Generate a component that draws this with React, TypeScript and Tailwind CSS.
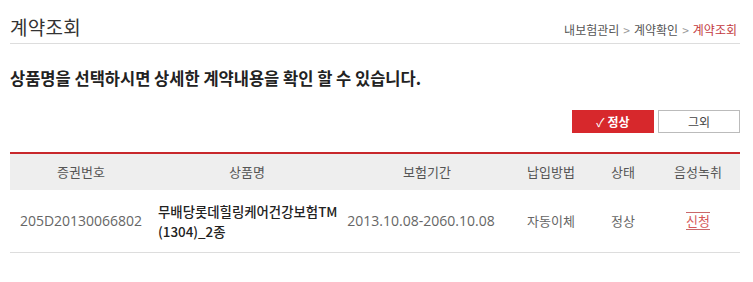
export default function App() {
  const font = { fontFamily: '"Noto Sans CJK KR", "Noto Sans", sans-serif' };
  const num = "font-['Open_Sans','Noto_Sans_CJK_KR',sans-serif] text-[14px]";
  return (
    <main className="w-[753px] h-[282px] bg-white px-[10px] text-[#555]" style={font}>
      <div className="w-[730px]">
        {/* Title row */}
        <div className="flex items-end justify-between h-[44px] border-b border-[#dddddd] pb-[3px]">
          <h1 className="text-[19px] leading-[26px] text-[#333] font-normal tracking-[0.3px]">계약조회</h1>
          <div className="flex items-center text-[12px] leading-[16px] text-[#555] mr-[3px] mb-[2px]">
            <span>내보험관리</span>
            <span className="mx-[4px] text-[#999]">&gt;</span>
            <span>계약확인</span>
            <span className="mx-[4px] text-[#999]">&gt;</span>
            <span className="text-[#c33a3e]">계약조회</span>
          </div>
        </div>

        <p className="mt-[23px] text-[16.5px] leading-[22px] font-bold text-[#222]">
          상품명을 선택하시면 상세한 계약내용을 확인 할 수 있습니다.
        </p>

        {/* Filter buttons */}
        <div className="flex justify-end gap-[4px] mt-[21px]">
          <button className="w-[82px] h-[23px] bg-[#d7282c] text-white text-[12px] font-bold flex items-center justify-center gap-[3px]">
            <span className="font-normal">✓</span>
            <span>정상</span>
          </button>
          <button className="w-[82px] h-[23px] border border-[#bbbbbb] bg-white text-[#444] text-[12px] flex items-center justify-center">
            그외
          </button>
        </div>

        {/* Table */}
        <table className="w-full mt-[19px] border-t-2 border-[#c8282c] text-[13px] table-fixed">
          <colgroup>
            <col className="w-[142px]" />
            <col className="w-[190px]" />
            <col className="w-[170px]" />
            <col className="w-[78px]" />
            <col className="w-[66px]" />
            <col className="w-[84px]" />
          </colgroup>
          <thead>
            <tr className="bg-[#eeeeee] h-[37px] text-[#555]">
              <th className="font-normal">증권번호</th>
              <th className="font-normal">상품명</th>
              <th className="font-normal">보험기간</th>
              <th className="font-normal">납입방법</th>
              <th className="font-normal">상태</th>
              <th className="font-normal">음성녹취</th>
            </tr>
          </thead>
          <tbody>
            <tr className="h-[62px] border-b border-[#dddddd]">
              <td className={`text-center text-[#666] ${num}`}>205D20130066802</td>
              <td className="pl-[6px] text-[#222] font-medium text-[13.4px] leading-[20px]">
                무배당롯데힐링케어건강보험TM
                <br />
                (1304)_2종
              </td>
              <td className={`text-center text-[#666] pr-[12px] ${num}`}>2013.10.08-2060.10.08</td>
              <td className="text-center text-[#666]">자동이체</td>
              <td className="text-center text-[#666]">정상</td>
              <td className="text-center">
                <span className="text-[#d65858] border-y border-[#c9686a] leading-[16px] inline-block">신청</span>
              </td>
            </tr>
          </tbody>
        </table>
      </div>
    </main>
  );
}
